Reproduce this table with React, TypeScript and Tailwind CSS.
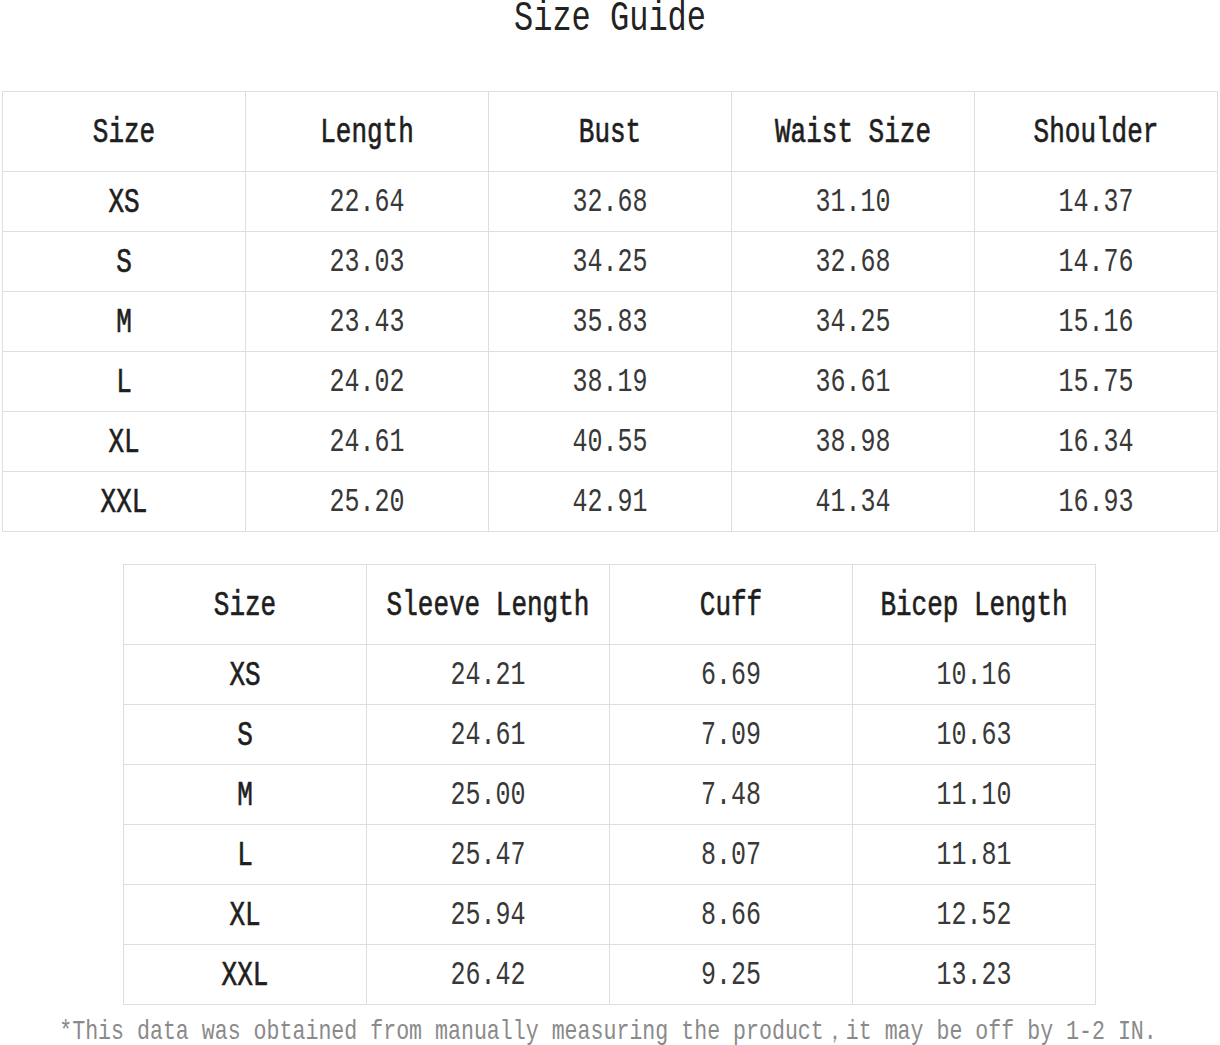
const top = {
  headers: ["Size", "Length", "Bust", "Waist Size", "Shoulder"],
  rows: [
    ["XS", "22.64", "32.68", "31.10", "14.37"],
    ["S", "23.03", "34.25", "32.68", "14.76"],
    ["M", "23.43", "35.83", "34.25", "15.16"],
    ["L", "24.02", "38.19", "36.61", "15.75"],
    ["XL", "24.61", "40.55", "38.98", "16.34"],
    ["XXL", "25.20", "42.91", "41.34", "16.93"],
  ],
};

const sleeve = {
  headers: ["Size", "Sleeve Length", "Cuff", "Bicep Length"],
  rows: [
    ["XS", "24.21", "6.69", "10.16"],
    ["S", "24.61", "7.09", "10.63"],
    ["M", "25.00", "7.48", "11.10"],
    ["L", "25.47", "8.07", "11.81"],
    ["XL", "25.94", "8.66", "12.52"],
    ["XXL", "26.42", "9.25", "13.23"],
  ],
};

// the source font is a tall, narrow mono; stretch Liberation Mono vertically to match
function Tall({ children, className = "scale-y-[1.35]" }: { children: React.ReactNode; className?: string }) {
  return <span className={`inline-block ${className}`}>{children}</span>;
}

const strong = "text-[26px] text-[#1e1e1e] [-webkit-text-stroke:0.5px_#1e1e1e]";

function SizeTable({ data, className }: { data: typeof top; className: string }) {
  return (
    <table className={`table-fixed border-collapse ${className}`}>
      <thead>
        <tr className="h-[80px]">
          {data.headers.map((h) => (
            <th
              key={h}
              className={`w-[243px] border border-[#dedede] pt-[3px] text-center font-normal ${strong}`}
            >
              <Tall>{h}</Tall>
            </th>
          ))}
        </tr>
      </thead>
      <tbody>
        {data.rows.map((row) => (
          <tr key={row[0]} className="h-[60px]">
            {row.map((cell, i) => (
              <td
                key={i}
                className={
                  i === 0
                    ? `border border-[#dedede] pt-[3px] text-center ${strong}`
                    : "border border-[#dedede] pt-[3px] text-center text-[25px] text-[#383838]"
                }
              >
                <Tall>{cell}</Tall>
              </td>
            ))}
          </tr>
        ))}
      </tbody>
    </table>
  );
}

export default function App() {
  return (
    <div className="w-[1220px] h-[1045px] bg-white overflow-hidden font-['Liberation_Mono',monospace]">
      <div className="h-[36px] pt-[3px] flex items-center justify-center text-[32px] leading-[26px] text-[#222]">
        <Tall className="scale-y-[1.3]">Size Guide</Tall>
      </div>
      <SizeTable data={top} className="mt-[55px] ml-[2px] w-[1216px]" />
      <SizeTable data={sleeve} className="mt-[32px] ml-[123px] w-[973px]" />
      <p className="mt-[16px] text-center text-[21.6px] leading-[20px] text-[#8a8a8a] pr-[4px]">
        <Tall className="scale-y-[1.3]">
          *This data was obtained from manually measuring the product，it may be off by 1-2 IN.
        </Tall>
      </p>
    </div>
  );
}
